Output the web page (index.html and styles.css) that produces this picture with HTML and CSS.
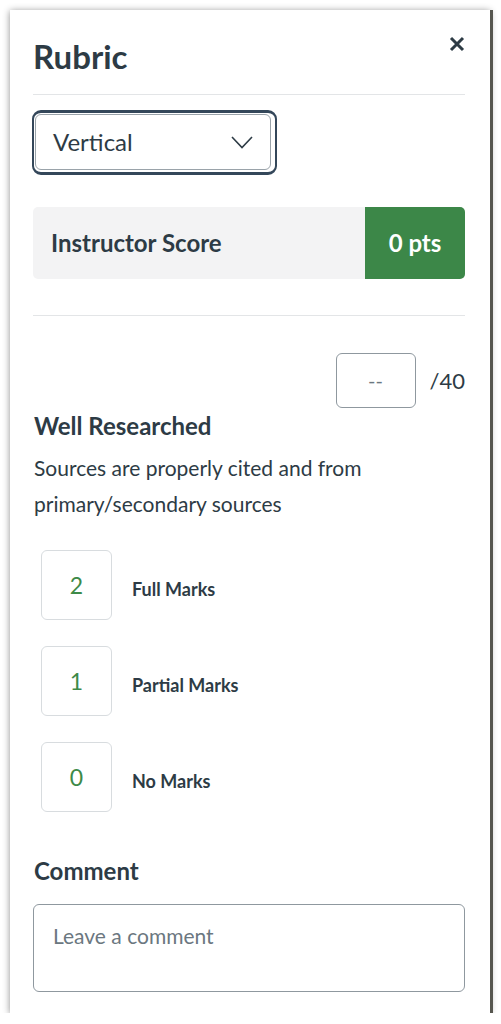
FILE: index.html
```html
<!DOCTYPE html>
<html>
<head>
<meta charset="utf-8">
<link rel="stylesheet" href="styles.css">
</head>
<body>
<div class="panel">
  <div class="header">
    <h1 class="title">Rubric</h1>
    <svg class="close" width="16" height="16" viewBox="0 0 16 16"><path d="M2 2 L14 14 M14 2 L2 14" stroke="#2d3b45" stroke-width="3" stroke-linecap="butt"/></svg>
  </div>
  <div class="select-wrap">
    <div class="select">
      <span class="select-text">Vertical</span>
      <svg class="chev" width="22" height="13" viewBox="0 0 22 13"><path d="M1 1 L11 11.5 L21 1" fill="none" stroke="#2d3b45" stroke-width="1.6"/></svg>
    </div>
  </div>
  <div class="score-bar">
    <span class="score-label">Instructor Score</span>
    <span class="score-pts">0 pts</span>
  </div>
  <div class="divider"></div>
  <div class="points-row">
    <div class="points-input">--</div>
    <span class="points-max">/40</span>
  </div>
  <h2 class="crit-title">Well Researched</h2>
  <p class="crit-desc">Sources are properly cited and from primary/secondary sources</p>
  <div class="ratings">
    <div class="rating"><div class="rating-box">2</div><span class="rating-label">Full Marks</span></div>
    <div class="rating"><div class="rating-box">1</div><span class="rating-label">Partial Marks</span></div>
    <div class="rating"><div class="rating-box">0</div><span class="rating-label">No Marks</span></div>
  </div>
  <h2 class="comment-title">Comment</h2>
  <div class="comment-box">Leave a comment</div>
</div>
</body>
</html>
```
FILE: styles.css
```css
* { box-sizing: border-box; }
body {
  margin: 0;
  background: #ffffff;
  font-family: Lato, "Noto Sans", sans-serif;
  color: #2d3b45;
}
.panel {
  margin: 10px 0 0 10px;
  width: 480px;
  height: 1003px;
  background: #fff;
  padding: 27px 25px 0 23px;
  box-shadow: 3px 0 0 #56564f, 0 1px 7px rgba(0,0,0,0.45);
}
.header {
  display: flex;
  justify-content: space-between;
  align-items: flex-start;
  padding-bottom: 17px;
  border-bottom: 1px solid #e3e5e7;
}
.title {
  margin: 0;
  font-size: 33px;
  line-height: 1.2;
  font-weight: 700;
}
.close { margin-top: -1px; margin-right: 0; }
.select-wrap {
  margin-top: 19px;
  margin-left: 2px;
  position: relative;
  width: 236px;
}
.select {
  position: relative;
  height: 56px;
  border: 1px solid #9aa3aa;
  border-radius: 6px;
  display: flex;
  align-items: center;
  justify-content: space-between;
  padding: 0 17px 0 17px;
}
.select-wrap::after {
  content: "";
  position: absolute;
  top: -4px; left: -3px; right: -6px; bottom: -5px;
  border: 2px solid #34475a;
  border-top-width: 3px;
  border-bottom-width: 3px;
  border-radius: 9px;
}
.select-text { font-size: 24px; }
.chev { margin-top: 2px; }
.score-bar {
  margin-top: 37px;
  height: 72px;
  display: flex;
  border-radius: 5px;
  background: #f3f3f4;
  overflow: hidden;
}
.score-label {
  flex: 1;
  display: flex;
  align-items: center;
  padding-left: 18px;
  font-size: 24px;
  font-weight: 700;
}
.score-pts {
  width: 100px;
  background: #3c8748;
  color: #fff;
  display: flex;
  align-items: center;
  justify-content: center;
  font-size: 24px;
  font-weight: 700;
}
.divider {
  margin-top: 36px;
  height: 1px;
  background: #e3e5e7;
}
.points-row {
  margin-top: 37px;
  display: flex;
  justify-content: flex-end;
  align-items: center;
  gap: 14px;
}
.points-input {
  width: 80px;
  height: 55px;
  border: 1px solid #8f989f;
  border-radius: 6px;
  display: flex;
  align-items: center;
  justify-content: center;
  color: #6b7780;
  font-size: 20px;
}
.points-max { font-size: 22px; }
.crit-title {
  margin: 4px 0 0 1px;
  font-size: 24px;
  line-height: 1.2;
  font-weight: 700;
}
.crit-desc {
  margin: 10px 0 0 1px;
  font-size: 21px;
  line-height: 36px;
}
.ratings {
  margin-top: 28px;
  margin-left: 8px;
  display: flex;
  flex-direction: column;
  gap: 26px;
}
.rating {
  display: flex;
  align-items: center;
  gap: 20px;
}
.rating-box {
  width: 71px;
  height: 70px;
  border: 1px solid #d8dcdf;
  border-radius: 6px;
  display: flex;
  align-items: center;
  justify-content: center;
  color: #3d8a48;
  font-size: 23px;
}
.rating-label {
  font-size: 18px;
  font-weight: 700;
  margin-top: 8px;
}
.comment-title {
  margin: 45px 0 0 1px;
  font-size: 24px;
  line-height: 1.2;
  font-weight: 700;
}
.comment-box {
  margin-top: 18px;
  height: 88px;
  border: 1px solid #8f989f;
  border-radius: 6px;
  padding: 18px 19px;
  font-size: 21px;
  line-height: 25px;
  color: #6b7780;
}
```
